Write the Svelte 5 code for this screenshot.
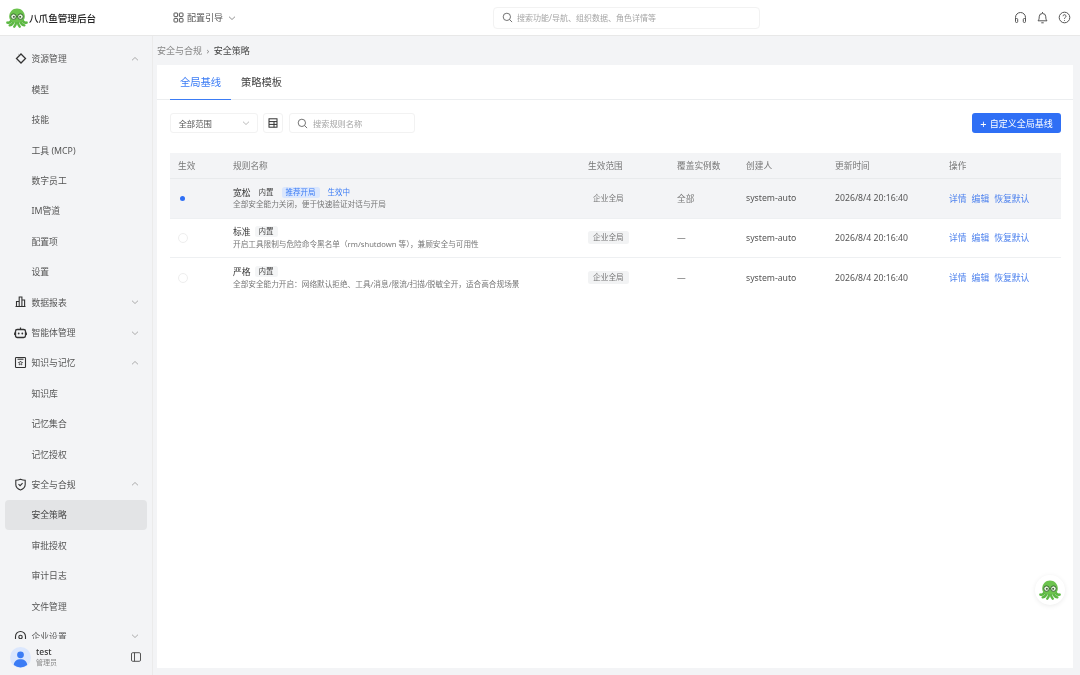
<script>
  const menu = [
    { label: '资源管理', icon: 'spark', open: true },
    { label: '模型' }, { label: '技能' }, { label: '工具 (MCP)' }, { label: '数字员工' }, { label: 'IM管道' }, { label: '配置项' }, { label: '设置' },
    { label: '数据报表', icon: 'chart', open: false },
    { label: '智能体管理', icon: 'robot', open: false },
    { label: '知识与记忆', icon: 'book', open: true },
    { label: '知识库' }, { label: '记忆集合' }, { label: '记忆授权' },
    { label: '安全与合规', icon: 'shield', open: true },
    { label: '安全策略', active: true }, { label: '审批授权' }, { label: '审计日志' }, { label: '文件管理' },
    { label: '企业设置', icon: 'home', open: false }
  ];
  const rows = [
    { name: '宽松', tags: true, desc: '全部安全能力关闭，便于快速验证对话与开局', on: true, count: '全部' },
    { name: '标准', desc: '开启工具限制与危险命令黑名单（rm/shutdown 等），兼顾安全与可用性', count: '—' },
    { name: '严格', desc: '全部安全能力开启：网络默认拒绝、工具/消息/限流/扫描/脱敏全开，适合高合规场景', count: '—' }
  ];
</script>

{#snippet logo(size)}
  <svg width={size} height={size} viewBox="0 0 24 24" aria-hidden="true">
    <g fill="none" stroke="#5cb843" stroke-width="2.600" stroke-linecap="round">
      <path d="M6 14c-.8 2.500-2.500 3.500-4.500 3M8.500 15c-.5 2.800-2 4.500-4.500 5M11 16c0 2.500-.6 4-2 5.500M13 16c0 2.500.6 4 2 5.500M15.500 15c.5 2.800 2 4.500 4.500 5M18 14c.8 2.500 2.500 3.500 4.500 3"/>
    </g>
    <path d="M3.500 10.500C3.500 5 7.300 1.500 12 1.500s8.500 3.500 8.500 9c0 4-3.500 6-8.500 6s-8.500-2-8.500-6Z" fill="#6cc34e"/>
    <circle cx="8.200" cy="10.500" r="3" fill="#e4f5dc" stroke="#33602e" stroke-width="1"/>
    <circle cx="15.800" cy="10.500" r="3" fill="#e4f5dc" stroke="#33602e" stroke-width="1"/>
    <path d="M11.200 10.500h1.600" stroke="#33602e" stroke-width="1"/>
    <circle cx="8.600" cy="10.700" r="1" fill="#24401f"/><circle cx="15.400" cy="10.700" r="1" fill="#24401f"/>
  </svg>
{/snippet}

{#snippet chev(up)}
  <svg class="chev" class:up width="8" height="8" viewBox="0 0 8 8" aria-hidden="true"><path d="M1 2.700 4 5.500 7 2.700" fill="none" stroke="currentColor" stroke-width=".8"/></svg>
{/snippet}

{#snippet search(size)}
  <svg width={size} height={size} viewBox="0 0 12 12" aria-hidden="true" fill="none" stroke="#666" stroke-width="1"><circle cx="5.300" cy="5.300" r="4"/><path d="m8.300 8.300 2.700 2.700"/></svg>
{/snippet}

{#snippet navicon(name)}
  <svg class="navicon" width="13" height="13" viewBox="0 0 13 13" fill="none" stroke="#333" stroke-width="1.100" aria-hidden="true">
    {#if name === 'spark'}
      <path d="M7 2 11.500 6.500 7 11 2.500 6.500Z" stroke-width="1.300"/><path d="M4.800 2.300h-.2M2.500 9.500h.1" stroke-width="1.300"/>
    {:else if name === 'chart'}
      <path d="M1.500 11.500h10M2.500 11.500V6.500h2.700v5M5.200 11.500V2h2.700v9.500M7.900 11.500V5h2.700v6.500"/>
    {:else if name === 'robot'}
      <rect x="1.500" y="3.500" width="10" height="8" rx="1.800" stroke-width="1.300"/><path d="M6.500 3.500V1.500M.3 6.500v2.500M12.700 6.500v2.500" stroke-width="1.200"/><circle cx="4.700" cy="7.500" r=".9" fill="#333" stroke="none"/><circle cx="8.300" cy="7.500" r=".9" fill="#333" stroke="none"/>
    {:else if name === 'book'}
      <rect x="1.500" y="1.500" width="10" height="10" rx=".8"/><path d="M3.500 3.200h6"/><path d="m6.500 5 .7 1.300 1.400.2-1 1 .2 1.400-1.300-.7-1.300.7.200-1.400-1-1 1.400-.2Z" stroke-width=".8"/>
    {:else if name === 'shield'}
      <path d="M1.800 2.200c1.700 0 3.300-.4 4.700-1 1.400.6 3 1 4.700 1V6.500c0 2.700-2 4.500-4.700 5.500-2.700-1-4.700-2.800-4.700-5.500Z"/><path d="m4.500 6.200 1.600 1.500 2.500-2.500"/>
    {:else}
      <path d="M1.500 6.500a5 5 0 0 1 10 0V11.500h-10Z"/><circle cx="6.500" cy="7" r="1.700"/>
    {/if}
  </svg>
{/snippet}

<div class="page">
  <header class="topbar">
    <div class="brand">{@render logo(22)}<span>八爪鱼管理后台</span></div>
    <div class="guide">
      <svg width="11" height="11" viewBox="0 0 11 11" fill="none" stroke="#444" stroke-width=".9" aria-hidden="true"><rect x="1" y="1" width="3.600" height="3.600" rx=".6"/><rect x="6.400" y="1" width="3.600" height="3.600" rx=".6"/><rect x="1" y="6.400" width="3.600" height="3.600" rx=".6"/><rect x="6.400" y="6.400" width="3.600" height="3.600" rx=".6"/></svg>
      <span>配置引导</span>{@render chev(false)}
    </div>
    <div class="globalsearch">{@render search(11)}<span>搜索功能/导航、组织数据、角色详情等</span></div>
    <div class="tools">
      <svg width="13" height="13" viewBox="0 0 13 13" fill="none" stroke="#555" stroke-width="1" aria-hidden="true"><path d="M1.500 9V6.500a5 5 0 0 1 10 0V9"/><rect x="1.500" y="7.500" width="2.200" height="4" rx="1"/><rect x="9.300" y="7.500" width="2.200" height="4" rx="1"/></svg>
      <svg width="13" height="13" viewBox="0 0 13 13" fill="none" stroke="#555" stroke-width="1" aria-hidden="true"><path d="M2 9.800h9c-1-1-1.200-2-1.200-4a3.300 3.300 0 0 0-6.600 0c0 2-.2 3-1.200 4Z"/><path d="M5.300 11.800h2.400M6.500 1v1"/></svg>
      <svg width="13" height="13" viewBox="0 0 13 13" fill="none" stroke="#555" stroke-width="1" aria-hidden="true"><circle cx="6.500" cy="6.500" r="5.300"/><path d="M5 5.200a1.500 1.500 0 1 1 2.300 1.300c-.6.400-.8.700-.8 1.300"/><circle cx="6.500" cy="9.500" r=".5" fill="#555" stroke="none"/></svg>
    </div>
  </header>

  <div class="body">
    <aside class="sidebar">
      <nav class="menu">
        {#each menu as m}
          <div class="item" class:group={m.icon} class:active={m.active}>
            {#if m.icon}{@render navicon(m.icon)}{/if}
            <span>{m.label}</span>
            {#if m.icon}{@render chev(m.open)}{/if}
          </div>
        {/each}
      </nav>
      <div class="user">
        <div class="avatar">
          <svg width="21" height="21" viewBox="0 0 21 21" aria-hidden="true"><circle cx="10.500" cy="10.500" r="10.500" fill="#dbe7fd"/><circle cx="10.500" cy="7.800" r="3.400" fill="#3b7cf5"/><path d="M3.800 18c.3-3.800 3-5.700 6.700-5.700s6.400 1.900 6.700 5.700a10.500 10.500 0 0 1-13.400 0Z" fill="#3b7cf5"/></svg>
        </div>
        <div class="who"><b>test</b><small>管理员</small></div>
        <svg class="collapse" width="10" height="10" viewBox="0 0 10 10" fill="none" stroke="#444" stroke-width=".9" aria-hidden="true"><rect x=".5" y=".7" width="9" height="8.600" rx="1.200"/><path d="M3.500 .7v8.600"/></svg>
      </div>
    </aside>

    <main class="content">
      <div class="crumbs"><span>安全与合规</span><i>›</i><em>安全策略</em></div>
      <section class="card">
        <div class="tabs"><div class="tab current">全局基线</div><div class="tab">策略模板</div></div>
        <div class="filters">
          <div class="box select"><span>全部范围</span>{@render chev(false)}</div>
          <div class="box square">
            <svg width="10" height="10" viewBox="0 0 10 10" fill="none" stroke="#333" stroke-width="1" aria-hidden="true"><rect x="1" y=".8" width="8" height="8.400"/><path d="M1 3.600h8M1 6.400h8M6 3.600v5.600"/></svg>
          </div>
          <div class="box rulesearch">{@render search(11)}<span>搜索规则名称</span></div>
          <button class="add"><span class="plus">+</span>自定义全局基线</button>
        </div>

        <div class="table">
          <div class="row head">
            <div>生效</div><div>规则名称</div><div>生效范围</div><div>覆盖实例数</div><div>创建人</div><div>更新时间</div><div>操作</div>
          </div>
          {#each rows as r}
            <div class="row" class:on={r.on}>
              <div><span class="radio" class:checked={r.on}></span></div>
              <div class="rule">
                <div class="title">
                  <span class="name">{r.name}</span><span class="tag gray">内置</span>
                  {#if r.tags}<span class="tag blue">推荐开局</span><span class="tag live">生效中</span>{/if}
                </div>
                <div class="desc">{r.desc}</div>
              </div>
              <div><span class="tag scope">企业全局</span></div>
              <div class="count">{r.count}</div>
              <div>system-auto</div>
              <div>2026/8/4 20:16:40</div>
              <div class="ops"><a href="#d">详情</a><a href="#e">编辑</a><a href="#r">恢复默认</a></div>
            </div>
          {/each}
        </div>
      </section>
    </main>
  </div>

  <div class="float">{@render logo(22)}</div>
</div>

<style>
  :global(body) { margin: 0; }
  .page {
    width: 1080px; height: 675px; position: relative; overflow: hidden;
    display: flex; flex-direction: column; background: #f3f4f6; color: #555;
    font-family: "Noto Sans", "Noto Sans CJK SC", sans-serif; font-size: 9px;
    filter: blur(.3px);
  }
  .topbar {
    height: 35px; flex: none; background: #fff; border-bottom: 1px solid #e8e8e8;
    display: flex; align-items: center;
  }
  .brand { width: 173px; padding-left: 6px; box-sizing: border-box; display: flex; align-items: center; gap: 1px; font-size: 9.600px; font-weight: 500; color: #222; flex: none; }
  .guide { width: 320px; flex: none; display: flex; align-items: center; gap: 3px; font-size: 9px; color: #555; }
  .guide .chev { margin-left: 2px; color: #777; }
  .globalsearch {
    width: 267px; height: 22px; box-sizing: border-box; flex: none; display: flex; align-items: center; gap: 4px;
    padding-left: 8px; border: 1px solid #f2f2f2; border-radius: 4px; color: #a5a5a5; font-size: 8px;
  }
  .tools { margin-left: auto; display: flex; gap: 9px; padding-right: 9px; }
  .tools svg { display: block; }
  .body { flex: 1; display: flex; min-height: 0; }
  .sidebar { width: 153px; flex: none; box-sizing: border-box; border-right: 1px solid #ebebeb; display: flex; flex-direction: column; }
  .menu { height: 603px; padding-top: 7.800px; box-sizing: border-box; overflow: hidden; flex: none; }
  .item {
    height: 30.400px; margin-left: 5px; width: 142px; box-sizing: border-box; padding-left: 26.500px; padding-right: 8px;
    display: flex; align-items: center; border-radius: 4px; font-size: 8.800px; color: #555; position: relative;
  }
  .item.active { background: #e3e4e6; color: #444; }
  .item .navicon { position: absolute; left: 9px; top: 8.500px; }
  .item .chev { margin-left: auto; margin-right: 0; color: #999; }
  .chev { display: block; flex: none; }
  .chev.up { transform: rotate(180deg); }
  .user { flex: 1; display: flex; align-items: center; padding-left: 10px; background: #f3f4f6; position: relative; }
  .who { display: flex; flex-direction: column; margin-left: 5px; line-height: 11px; }
  .who b { font-weight: 500; font-size: 8.500px; color: #333; }
  .who small { font-size: 7px; color: #888; }
  .collapse { margin-left: auto; margin-right: 11px; }
  .avatar { display: flex; }
  .content { flex: 1; min-width: 0; padding: 0 7px 7px 4px; display: flex; flex-direction: column; }
  .crumbs { height: 29px; flex: none; display: flex; align-items: center; gap: 4.500px; color: #888; font-size: 9px; }
  .crumbs em { font-style: normal; color: #444; }
  .crumbs i { font-style: normal; color: #888; }
  .card { flex: 1; background: #fff; padding: 0 12px 0 13px; display: flex; flex-direction: column; margin-left: 0; }
  .tabs { height: 35px; box-sizing: border-box; flex: none; margin: 0 -12px 0 -13px; padding-left: 13px; display: flex; border-bottom: 1px solid #eceef0; }
  .tab { height: 35px; width: 61px; box-sizing: border-box; text-align: center; line-height: 34px; font-size: 10.300px; color: #444; }
  .tab.current { color: #3b7cf5; border-bottom: 1px solid #3b7cf5; }
  .filters { height: 20px; margin-top: 13px; flex: none; display: flex; align-items: center; gap: 5px; }
  .box { height: 20px; box-sizing: border-box; border: 1px solid #f2f2f2; border-radius: 3px; display: flex; align-items: center; }
  .select { width: 88px; padding: 0 7.500px; justify-content: space-between; color: #555; font-size: 8.400px; }
  .select .chev { color: #aaa; margin-right: 0; }
  .square { width: 20px; justify-content: center; margin-right: 1px; }
  .rulesearch { width: 126px; padding-left: 7px; gap: 5px; color: #a5a5a5; font-size: 8.200px; }
  .add {
    margin-left: auto; width: 89px; height: 20px; border: 0; border-radius: 3px; background: #2f6ff5; color: #fff;
    font: inherit; font-size: 9px; display: flex; align-items: center; justify-content: center; gap: 3px; padding: 0;
  }
  .plus { font-size: 11px; line-height: 1; }
  .table { margin-top: 20px; }
  .row {
    display: grid; grid-template-columns: 55px 355px 89px 69px 89px 114px 120px; height: 39.500px; align-items: center;
    border-bottom: 1px solid #eef0f2; box-sizing: border-box; font-size: 8.700px; color: #555;
  }
  .row:last-child { border-bottom: 0; }
  .row > div { padding-left: 8px; min-width: 0; white-space: nowrap; }
  .row.head { height: 26px; background: #f3f4f6; color: #777; border-bottom: 1px solid #e8eaec; }
  .row.on { background: #f3f4f6; }
  .radio { display: block; width: 10px; height: 10px; border-radius: 50%; border: 1px solid #eeeeee; box-sizing: border-box; background: #fff; position: relative; margin-left: -.5px; }
  .radio.checked { border: 0; background: transparent; }
  .radio.checked::after { content: ""; position: absolute; left: 2.500px; top: 2.500px; width: 5px; height: 5px; border-radius: 50%; background: #2f6ff5; }
  .title { display: flex; align-items: center; gap: 3px; height: 12px; }
  .name { color: #333; font-size: 8.800px; margin-right: 1px; }
  .tag { display: inline-block; padding: 0 4px; font-size: 7.500px; line-height: 11px; border-radius: 2.500px; }
  .tag.gray { background: #f4f5f6; color: #444; }
  .row.on .tag.gray { background: transparent; }
  .tag.blue { background: #dbe7fd; color: #3b7cf5; margin-left: 1px; }
  .tag.live { color: #3b7cf5; margin-left: 1px; }
  .desc { font-size: 7.650px; color: #777; line-height: 12px; }
  .tag.scope { background: #f2f3f4; color: #777; padding: 0 5px; line-height: 13px; font-size: 7.700px; }
  .row.on .tag.scope { background: transparent; }
  .count { color: #777; }
  .ops { display: flex; gap: 5px; }
  .ops a { color: #4f83ee; text-decoration: none; font-size: 8.800px; }
  .float {
    position: absolute; left: 1035px; top: 575px; width: 30px; height: 30px; border-radius: 50%; background: #fff;
    box-shadow: 0 1px 5px rgba(0,0,0,.08); display: flex; align-items: center; justify-content: center;
  }
</style>
